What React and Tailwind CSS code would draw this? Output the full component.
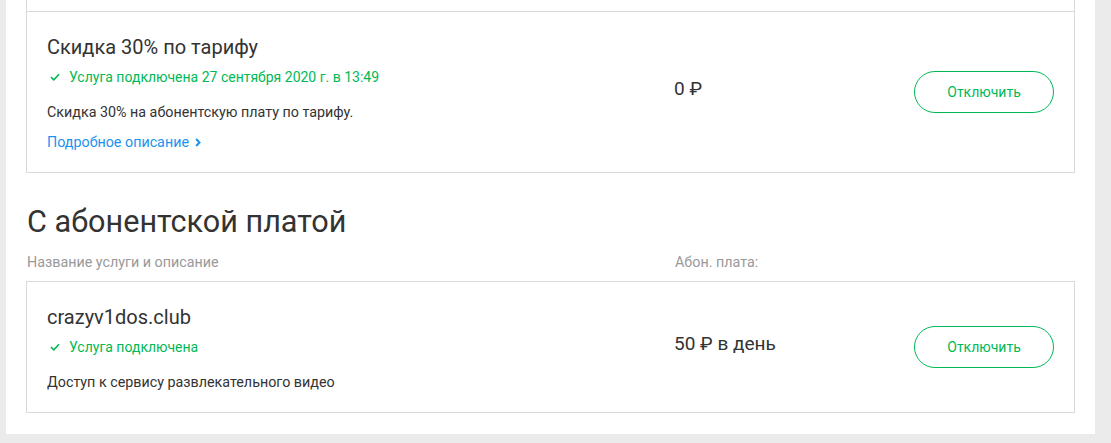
import React from "react";

const font = { fontFamily: "Roboto, 'Noto Sans', sans-serif" };

function Check() {
  return (
    <svg width="10" height="8" viewBox="0 0 10 8" className="mr-[9px] ml-[3px]">
      <path d="M1 4.2 L3.8 6.8 L9 1.2" fill="none" stroke="#00b956" strokeWidth="1.6" />
    </svg>
  );
}

function Chevron() {
  return (
    <svg width="6" height="9" viewBox="0 0 6 9" className="ml-[6px]">
      <path d="M1.2 1 L4.5 4.5 L1.2 8" fill="none" stroke="#1a93ee" strokeWidth="2" />
    </svg>
  );
}

function Card({ title, status, desc, link, price }) {
  return (
    <div className="border border-[#d9d9d9] grid grid-cols-[647px_1fr_auto] items-center pr-[20px]">
      <div className="pl-[20px] pt-[23px] pb-[20px]">
        <div className="text-[20px] leading-[24px] text-[#333]">{title}</div>
        <div className="mt-[8px] flex items-center text-[14px] leading-[20px] text-[#00b956]">
          <Check />
          {status}
        </div>
        <div className="mt-[15px] text-[14.3px] leading-[20px] text-[#333]">{desc}</div>
        {link && (
          <div className="mt-[10px] flex items-center text-[14.3px] leading-[20px] text-[#1a93ee]">
            {link}
            <Chevron />
          </div>
        )}
      </div>
      <div className="text-[19px] leading-[24px] text-[#333] -mt-[6px]">{price}</div>
      <button className="w-[140px] h-[42px] rounded-full border-[1.5px] border-[#00b956] text-[#00b956] text-[14px] bg-white">
        Отключить
      </button>
    </div>
  );
}

export default function App() {
  return (
    <div className="bg-[#ebebeb] min-h-[443px] pl-[6px] pr-[16px]" style={font}>
      <div className="bg-white px-[20px] pb-[21px]">
        <div className="h-[11px] border-x border-[#d9d9d9]" />
        <Card
          title="Скидка 30% по тарифу"
          status="Услуга подключена 27 сентября 2020 г. в 13:49"
          desc="Скидка 30% на абонентскую плату по тарифу."
          link="Подробное описание"
          price="0 ₽"
        />
        <h2 className="mt-[31px] text-[30.6px] leading-[36px] text-[#333] font-normal pl-[1px]">
          С абонентской платой
        </h2>
        <div className="mt-[13px] grid grid-cols-[648px_1fr] text-[14.3px] leading-[18px] text-[#999] pl-[1px]">
          <div>Название услуги и описание</div>
          <div>Абон. плата:</div>
        </div>
        <div className="mt-[10px]">
          <Card
            title="crazyv1dos.club"
            status="Услуга подключена"
            desc="Доступ к сервису развлекательного видео"
            price="50 ₽ в день"
          />
        </div>
      </div>
    </div>
  );
}
